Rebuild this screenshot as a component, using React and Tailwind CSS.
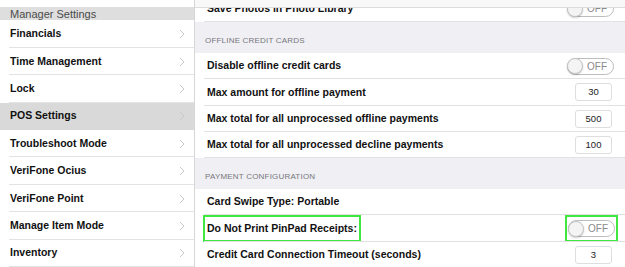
// ── Manager Settings / POS Settings ───────────────────────────────────
const menu = [
  'Financials',
  'Time Management',
  'Lock',
  'POS Settings',
  'Troubleshoot Mode',
  'VeriFone Ocius',
  'VeriFone Point',
  'Manage Item Mode',
  'Inventory',
]

function Chevron() {
  return (
    <svg width="6" height="10" viewBox="0 0 6 10" className="shrink-0">
      <polyline points="1,1 5,5 1,9" fill="none" stroke="#c7c7cc" strokeWidth="1" />
    </svg>
  )
}

function Toggle() {
  return (
    <div className="flex items-center w-[47px] h-[17px] rounded-full border border-[#bdbdbd] bg-white">
      <div className="w-[16px] h-[16px] -ml-px rounded-full border border-[#c4c4c4] bg-[#f4f4f4] shadow-[0_1px_2px_rgba(0,0,0,0.2)]" />
      <span className="flex-1 text-center text-[10px] text-[#8a8a8a] pr-[2px]">OFF</span>
    </div>
  )
}

function Box({ value }) {
  return (
    <div className="w-[37px] h-[18px] mr-[2px] flex items-center justify-center border border-[#dedede] rounded-[3px] text-[9.5px] text-[#222]">
      {value}
    </div>
  )
}

function Row({ label, right, h = 'h-[26.3px]', mark }) {
  return (
    <div className={`${h} flex items-stretch pl-[8px] relative`}>
      <div className={`flex items-center ${mark ? 'border-2 border-[#3ee83e] px-[2px]' : 'pl-[4px]'}`}>
        <span className="text-[10.5px] font-semibold text-[#111]">{label}</span>
      </div>
      <div className="flex-1" />
      <div className={`flex items-center ${mark ? 'border-2 border-[#3ee83e] px-[1px] mr-[7px]' : 'pr-[11px]'}`}>
        {right}
      </div>
      <div className="absolute left-[9px] right-0 bottom-0 h-px bg-[#e2e2e2]" />
    </div>
  )
}

function Section({ title }) {
  return (
    <div className="h-[31px] bg-[#efeff4] flex items-end pl-[10px] pb-[6px]">
      <span className="text-[8px] tracking-[0.2px] text-[#77777c]">{title}</span>
    </div>
  )
}

export default function App() {
  return (
    <div className="w-[625px] h-[267px] flex overflow-hidden bg-white font-['Liberation_Sans',Arial,sans-serif]">
      {/* master list */}
      <div className="w-[195px] shrink-0 flex flex-col border-r border-[#d6d6d6]">
        <div className="h-[8px] bg-white" />
        <div className="h-[13px] bg-[#dedede] flex items-center pl-[10px]">
          <span className="text-[11px] text-[#4a4a4a]">Manager Settings</span>
        </div>
        {menu.map(m => (
          <div key={m} className={`h-[27.4px] shrink-0 relative flex items-center pl-[10px] pr-[9px] ${m === 'POS Settings' ? 'bg-[#d9d9d9]' : 'bg-white'}`}>
            <span className="flex-1 text-[10.5px] font-semibold text-[#111]">{m}</span>
            <Chevron />
            {m !== 'POS Settings' && <div className="absolute left-[9px] right-0 bottom-0 h-px bg-[#e3e3e3]" />}
          </div>
        ))}
      </div>

      {/* detail */}
      <div className="flex-1 flex flex-col overflow-hidden">
        <div className="h-[8px] shrink-0 relative z-10 bg-[#f8f8f8] border-b border-[#dcdcdc]" />
        <div className="-mt-[13px] flex flex-col">
          <Row h="h-[27px]" label="Save Photos in Photo Library" right={<Toggle />} />
          <Section title="OFFLINE CREDIT CARDS" />
          <Row label="Disable offline credit cards" right={<Toggle />} />
          <Row label="Max amount for offline payment" right={<Box value="30" />} />
          <Row label="Max total for all unprocessed offline payments" right={<Box value="500" />} />
          <Row label="Max total for all unprocessed decline payments" right={<Box value="100" />} />
          <Section title="PAYMENT CONFIGURATION" />
          <Row label="Card Swipe Type: Portable" right={null} />
          <Row label="Do Not Print PinPad Receipts:" right={<Toggle />} mark />
          <Row label="Credit Card Connection Timeout (seconds)" right={<Box value="3" />} />
        </div>
      </div>
    </div>
  )
}
